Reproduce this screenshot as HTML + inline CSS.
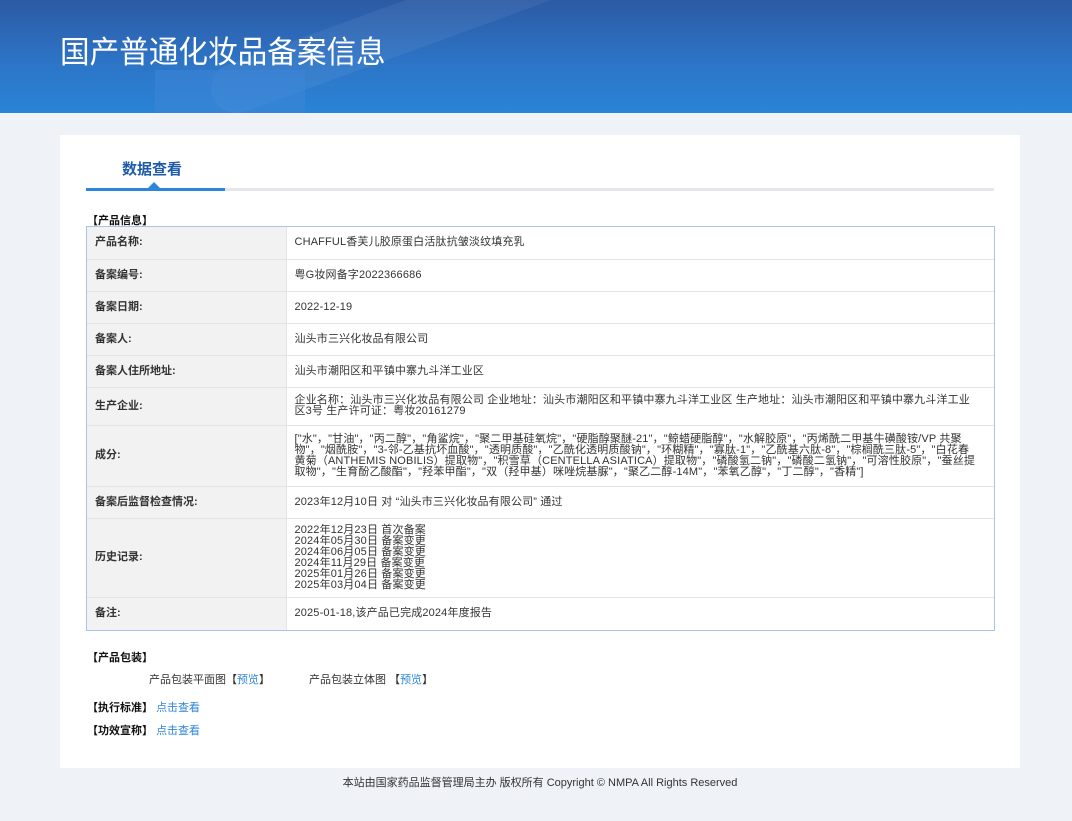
<!DOCTYPE html>
<html><head><meta charset="utf-8"><style>
*{margin:0;padding:0;box-sizing:border-box}
body{width:1072px;height:821px;background:#eff2f6;font-family:"Liberation Sans","Noto Sans CJK SC",sans-serif;color:#333;overflow:hidden;position:relative}
.hd{position:absolute;left:0;top:0;width:1072px;height:113px;background:linear-gradient(180deg,#2c5aa4 0%,#2d74c6 55%,#2a84d6 100%);overflow:hidden}
.hd .b1{position:absolute;left:155px;top:70px;width:150px;height:60px;background:#3e86d8;opacity:.5}
.hd .b2{position:absolute;left:200px;top:0;width:420px;height:50px;border-radius:25px;background:rgba(255,255,255,.06);transform:rotate(-20deg)}
.hd h1{position:absolute;left:60px;top:34px;font-size:31px;font-weight:normal;color:#fff;line-height:38px;transform:scaleX(.955);transform-origin:left;white-space:nowrap}
.card{position:absolute;left:60px;top:135px;width:960px;height:633px;background:#fff}
.tab{position:absolute;left:62px;top:23px;font-size:15px;color:#1e5aa8;font-weight:bold}
.line{position:absolute;left:26px;top:53px;width:908px;height:3px;background:#e5e7ea}
.line2{position:absolute;left:26px;top:53px;width:139px;height:3px;background:#2e86da}
.tri{position:absolute;left:88px;top:47px;width:0;height:0;border-left:6px solid transparent;border-right:6px solid transparent;border-bottom:6px solid #2e86da}
.sec{position:absolute;left:27px;font-size:11px;font-weight:bold;color:#111}
.tw{position:absolute;left:26px;top:91px;width:909px;border:1px solid #a8c4ec}
table{width:907px;border-collapse:collapse;font-size:11px}
td{border:1px solid #e3e3e3;padding:0 8px;vertical-align:middle;line-height:11px}
tr:first-child td{border-top:none}tr:last-child td{border-bottom:none}
td:first-child{border-left:none}td:last-child{border-right:none}
td.l{width:199px;background:#f2f2f2;font-weight:bold;color:#333}
td.r{color:#333;letter-spacing:.15px;padding-right:14px}
a{color:#2e86da;text-decoration:none}
.ft{position:absolute;top:774px;left:0;width:1080px;text-align:center;font-size:11px;color:#333}
</style></head><body>
<div class="hd"><div class="b2"></div><div class="b1"></div><h1>国产普通化妆品备案信息</h1></div>
<div class="card">
<div class="tab">数据查看</div>
<div class="line"></div><div class="line2"></div><div class="tri"></div>
<div class="sec" style="top:77px">【产品信息】</div>
<div class="tw"><table>
<tr style="height:32px"><td class="l">产品名称:</td><td class="r">CHAFFUL香芙儿胶原蛋白活肽抗皱淡纹填充乳</td></tr>
<tr style="height:32px"><td class="l">备案编号:</td><td class="r">粤G妆网备字2022366686</td></tr>
<tr style="height:32px"><td class="l">备案日期:</td><td class="r">2022-12-19</td></tr>
<tr style="height:32px"><td class="l">备案人:</td><td class="r">汕头市三兴化妆品有限公司</td></tr>
<tr style="height:32px"><td class="l">备案人住所地址:</td><td class="r">汕头市潮阳区和平镇中寨九斗洋工业区</td></tr>
<tr style="height:38px"><td class="l">生产企业:</td><td class="r">企业名称：汕头市三兴化妆品有限公司 企业地址：汕头市潮阳区和平镇中寨九斗洋工业区 生产地址：汕头市潮阳区和平镇中寨九斗洋工业区3号 生产许可证：粤妆20161279</td></tr>
<tr style="height:61px"><td class="l">成分:</td><td class="r">["水"，"甘油"，"丙二醇"，"角鲨烷"，"聚二甲基硅氧烷"，"硬脂醇聚醚-21"，"鲸蜡硬脂醇"，"水解胶原"，"丙烯酰二甲基牛磺酸铵/VP 共聚物"，"烟酰胺"，"3-邻-乙基抗坏血酸"，"透明质酸"，"乙酰化透明质酸钠"，"环糊精"，"寡肽-1"，"乙酰基六肽-8"，"棕榈酰三肽-5"，"白花春黄菊（ANTHEMIS NOBILIS）提取物"，"积雪草（CENTELLA ASIATICA）提取物"，"磷酸氢二钠"，"磷酸二氢钠"，"可溶性胶原"，"蚕丝提取物"，"生育酚乙酸酯"，"羟苯甲酯"，"双（羟甲基）咪唑烷基脲"，"聚乙二醇-14M"，"苯氧乙醇"，"丁二醇"，"香精"]</td></tr>
<tr style="height:32px"><td class="l">备案后监督检查情况:</td><td class="r">2023年12月10日 对 “汕头市三兴化妆品有限公司” 通过</td></tr>
<tr style="height:79px"><td class="l">历史记录:</td><td class="r">2022年12月23日 首次备案<br>2024年05月30日 备案变更<br>2024年06月05日 备案变更<br>2024年11月29日 备案变更<br>2025年01月26日 备案变更<br>2025年03月04日 备案变更</td></tr>
<tr style="height:33px"><td class="l">备注:</td><td class="r">2025-01-18,该产品已完成2024年度报告</td></tr>
</table></div>
<div class="sec" style="top:514px">【产品包装】</div>
<div style="position:absolute;top:536px;left:89px;font-size:11px">产品包装平面图【<a>预览</a>】</div>
<div style="position:absolute;top:536px;left:249px;font-size:11px">产品包装立体图 【<a>预览</a>】</div>
<div class="sec" style="top:564px">【执行标准】 <a style="font-weight:normal">点击查看</a></div>
<div class="sec" style="top:587px">【功效宣称】 <a style="font-weight:normal">点击查看</a></div>
</div>
<div class="ft">本站由国家药品监督管理局主办 版权所有 Copyright © NMPA All Rights Reserved</div>
</body></html>
